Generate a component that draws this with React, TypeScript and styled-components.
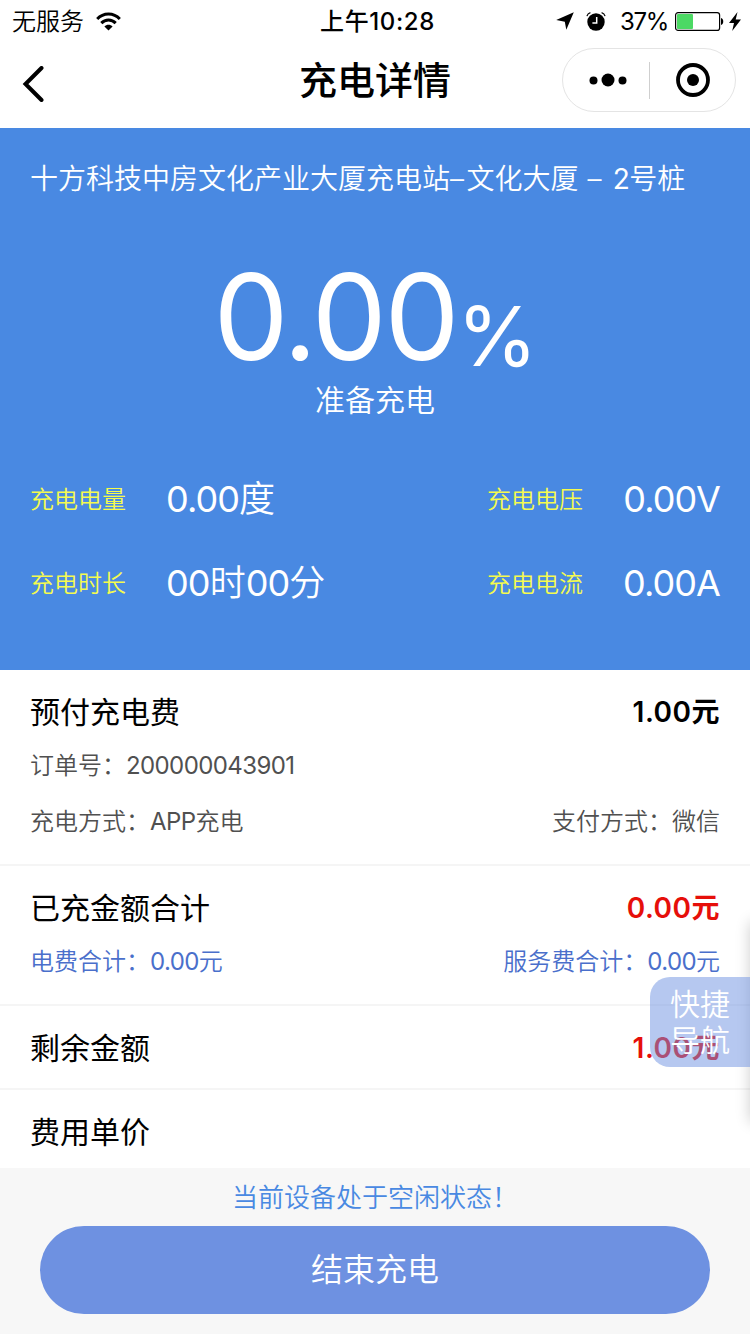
import React from "react";
import styled, { createGlobalStyle } from "styled-components";

const GlobalStyle = createGlobalStyle`
  * { box-sizing: border-box; }
  body {
    margin: 0;
    background: #fff;
    color: #000;
    font-family: Inter, "Noto Sans CJK SC", sans-serif;
  }
  svg { flex: none; }
`;

const Screen = styled.main`
  position: relative;
  display: flex;
  flex-direction: column;
  width: 750px;
  height: 1334px;
  overflow: hidden;
  background: #fff;
`;

const StatusBar = styled.header`
  display: grid;
  grid-template-columns: 1fr auto 1fr;
  align-items: center;
  height: 40px;
  padding: 0 9px 0 12px;
  font-size: 24px;
  line-height: 40px;
`;

const StatusGroup = styled.div<{ $end?: boolean }>`
  display: flex;
  align-items: center;
  justify-content: ${(p) => (p.$end ? "flex-end" : "flex-start")};
`;

const StatusText = styled.span`
  padding-top: 2px;
`;

const Carrier = styled(StatusText)`
  margin-right: 12px;
  font-weight: 350;
`;

const Clock = styled(StatusText)`
  padding: 1px 0 0 2px;
  font-weight: 500;
  letter-spacing: 0.6px;
`;

const BatteryText = styled(StatusText)`
  margin: 0 7px 0 14px;
  padding-top: 1px;
  letter-spacing: -1.3px;
`;

const AlarmSvg = styled.svg`
  margin-left: 12px;
`;

const BoltSvg = styled.svg`
  margin-left: 5px;
`;

const NavBar = styled.nav`
  display: grid;
  grid-template-columns: 1fr auto 1fr;
  align-items: center;
  height: 88px;
  padding: 0 14px 8px;
`;

const BackButton = styled.button`
  display: flex;
  margin: 8px 0 0 8px;
  padding: 0;
  border: 0;
  background: none;
`;

const NavTitle = styled.h1`
  margin: 0;
  font-size: 38px;
  font-weight: 500;
  line-height: 60px;
`;

const Capsule = styled.div`
  justify-self: end;
  display: flex;
  align-items: center;
  width: 174px;
  height: 64px;
  border: 1px solid #e4e4e4;
  border-radius: 32px;
`;

const CapsuleButton = styled.button`
  flex: 1;
  display: flex;
  align-items: center;
  justify-content: center;
  padding: 0;
  border: 0;
  background: none;
`;

const MoreButton = styled(CapsuleButton)`
  flex: none;
  width: 86px;
  padding-left: 3px;
`;

const CapsuleDivider = styled.span`
  width: 1px;
  height: 37px;
  background: #cfcfcf;
`;

const Hero = styled.section`
  display: flex;
  flex-direction: column;
  height: 542px;
  padding: 31px 30px 0;
  background: #4989e2;
  color: #fff;
`;

const StationName = styled.div`
  font-size: 28px;
  line-height: 40px;
  font-weight: 350;
  word-spacing: 1px;
  white-space: nowrap;
`;

const Dash = styled.span`
  letter-spacing: 2.5px;
`;

const Percent = styled.div`
  height: 120px;
  margin-top: 58px;
  font-size: 119px;
  line-height: 120px;
  letter-spacing: -2.5px;
  text-align: center;
`;

const PercentSign = styled.span`
  font-size: 82px;
  line-height: 1;
  letter-spacing: -1px;
  vertical-align: -6px;
`;

const ChargeState = styled.div`
  margin-top: 1px;
  font-size: 30px;
  font-weight: 350;
  line-height: 44px;
  text-align: center;
`;

const Metrics = styled.div`
  display: grid;
  grid-template-columns: 136px 1fr auto auto;
  grid-auto-rows: 84px;
  margin-top: 35px;
  line-height: 84px;
`;

const MetricLabel = styled.span`
  padding-top: 1px;
  color: #f5fb4e;
  font-size: 24px;
  font-weight: 350;
`;

const MetricValue = styled.span<{ $end?: boolean }>`
  padding-left: ${(p) => (p.$end ? "40px" : "0")};
  text-align: ${(p) => (p.$end ? "right" : "left")};
  font-size: 36px;
  font-weight: 350;
`;

const Section = styled.section`
  padding: 14px 30px 17px;
  border-bottom: 2px solid #f5f5f5;
`;

const TitleRow = styled.div`
  display: flex;
  align-items: center;
  justify-content: space-between;
  height: 51px;
  font-size: 30px;
`;

const Amount = styled.span<{ $color?: string }>`
  color: ${(p) => p.$color ?? "#000"};
  font-size: 28px;
  font-weight: 600;
  letter-spacing: 0.5px;
`;

const InfoRow = styled.div<{ $color?: string }>`
  display: flex;
  align-items: center;
  justify-content: space-between;
  height: 56px;
  color: ${(p) => p.$color ?? "#505050"};
  font-size: 24px;
  font-weight: 350;
`;

const Digits = styled.span`
  font-weight: 400;
  letter-spacing: -0.025em;
`;

const Footer = styled.footer`
  position: absolute;
  right: 0;
  bottom: 0;
  left: 0;
  height: 166px;
  padding: 11px 40px 20px;
  background: #f7f7f7;
`;

const Notice = styled.div`
  height: 47px;
  color: #4989e2;
  font-size: 26px;
  font-weight: 350;
  line-height: 38px;
  text-align: center;
`;

const StopButton = styled.button`
  display: block;
  width: 100%;
  height: 88px;
  padding: 0 0 6px;
  border: 0;
  border-radius: 44px;
  background: #6e91e1;
  color: #fff;
  font: inherit;
  font-size: 32px;
  font-weight: 350;
`;

const QuickNav = styled.button`
  position: absolute;
  top: 977px;
  right: 0;
  width: 100px;
  height: 90px;
  padding: 0;
  border: 0;
  border-radius: 20px 0 0 20px;
  background: rgba(110, 145, 225, 0.5);
  color: #fff;
  font: inherit;
  font-size: 30px;
  font-weight: 350;
  line-height: 36px;
`;

const DrawerEdge = styled.div`
  position: absolute;
  top: 922px;
  left: 750px;
  width: 100px;
  height: 200px;
  box-shadow: 0 0 14px rgba(0, 0, 0, 0.2);
`;

const WifiIcon = () => (
  <svg width="25" height="19" viewBox="0 0 25 19" fill="none" stroke="#000" strokeWidth="3">
    <path d="M1.2 6.9C7.4.2 17.6.2 23.8 6.9" />
    <path d="M5.3 11.1c4-4.1 10.4-4.1 14.4 0" />
    <path d="M8.4 14.4c2.3-2.3 5.9-2.3 8.2 0L12.5 18.6z" fill="#000" stroke="none" />
  </svg>
);

const LocationIcon = () => (
  <svg width="18" height="18" viewBox="0 0 18 18">
    <path d="M17.8 0.3L10.3 17.8L8.8 9.7L0.2 8z" />
  </svg>
);

const AlarmIcon = () => (
  <AlarmSvg width="20" height="19" viewBox="0 0 20 19">
    <circle cx="10" cy="10" r="8.7" />
    <path
      d="M0.9 4.2C1.4 2.5 2.6 1.2 4.4 0.7M19.1 4.2C18.6 2.5 17.4 1.2 15.6 0.7"
      fill="none"
      stroke="#000"
      strokeWidth="1.2"
    />
    <path d="M10.7 5v6H6.4" fill="none" stroke="#fff" strokeWidth="1.5" />
  </AlarmSvg>
);

const BatteryIcon = () => (
  <svg width="49" height="19" viewBox="0 0 49 19">
    <rect x="0.6" y="0.6" width="44" height="17.8" rx="2.5" fill="#fff" stroke="#000" strokeWidth="1.2" />
    <rect x="2" y="2" width="16" height="15" rx="1" fill="#4cd964" />
    <path d="M46 6c3 0.8 3 6.2 0 7z" />
  </svg>
);

const BoltIcon = () => (
  <BoltSvg width="12" height="19" viewBox="0 0 12 19">
    <path d="M8.5 0L0 11h5L3.2 19L12 7.6H6.7z" />
  </BoltSvg>
);

const LATIN_RUN = /([0-9A-Z.]+)/;

// Latin runs are set slightly heavier and tighter than the Chinese text around them.
const Mixed = ({ children }: { children: string }) => (
  <span>
    {children
      .split(LATIN_RUN)
      .map((part, i) => (i % 2 ? <Digits key={i}>{part}</Digits> : part))}
  </span>
);

const metrics = [
  ["充电电量", "0.00度", "充电电压", "0.00V"],
  ["充电时长", "00时00分", "充电电流", "0.00A"],
];

export default function App() {
  return (
    <>
      <GlobalStyle />
      <Screen>
        <StatusBar>
          <StatusGroup>
            <Carrier>无服务</Carrier>
            <WifiIcon />
          </StatusGroup>
          <Clock>上午10:28</Clock>
          <StatusGroup $end>
            <LocationIcon />
            <AlarmIcon />
            <BatteryText>37%</BatteryText>
            <BatteryIcon />
            <BoltIcon />
          </StatusGroup>
        </StatusBar>
        <NavBar>
          <BackButton aria-label="返回">
            <svg width="22" height="36" viewBox="0 0 22 36" fill="none" stroke="#000" strokeWidth="4">
              <path d="M19.5 2L3.5 18l16 16" strokeLinecap="round" />
            </svg>
          </BackButton>
          <NavTitle>充电详情</NavTitle>
          <Capsule>
            <MoreButton aria-label="更多">
              <svg width="38" height="14" viewBox="0 0 38 14">
                <circle cx="4.5" cy="7.5" r="4" />
                <circle cx="19" cy="7" r="6.5" />
                <circle cx="33.5" cy="7.5" r="4" />
              </svg>
            </MoreButton>
            <CapsuleDivider />
            <CapsuleButton aria-label="关闭">
              <svg width="34" height="34" viewBox="0 0 34 34">
                <circle cx="17" cy="17" r="15" fill="none" stroke="#000" strokeWidth="3.8" />
                <circle cx="17" cy="17" r="6" />
              </svg>
            </CapsuleButton>
          </Capsule>
        </NavBar>

        <Hero>
          <StationName>
            十方科技中房文化产业大厦充电站<Dash>–</Dash>文化大厦 <Dash>–</Dash> <Mixed>2号桩</Mixed>
          </StationName>
          <Percent>
            0.00<PercentSign>%</PercentSign>
          </Percent>
          <ChargeState>准备充电</ChargeState>
          <Metrics>
            {metrics.map(([label, value, label2, value2]) => (
              <React.Fragment key={label}>
                <MetricLabel>{label}</MetricLabel>
                <MetricValue>
                  <Mixed>{value}</Mixed>
                </MetricValue>
                <MetricLabel>{label2}</MetricLabel>
                <MetricValue $end>
                  <Mixed>{value2}</Mixed>
                </MetricValue>
              </React.Fragment>
            ))}
          </Metrics>
        </Hero>

        <Section>
          <TitleRow>
            预付充电费<Amount>1.00元</Amount>
          </TitleRow>
          <InfoRow>
            <Mixed>订单号：200000043901</Mixed>
          </InfoRow>
          <InfoRow>
            <Mixed>充电方式：APP充电</Mixed>
            <Mixed>支付方式：微信</Mixed>
          </InfoRow>
        </Section>
        <Section>
          <TitleRow>
            已充金额合计<Amount $color="#e60f0a">0.00元</Amount>
          </TitleRow>
          <InfoRow $color="#4a6fcb">
            <Mixed>电费合计：0.00元</Mixed>
            <Mixed>服务费合计：0.00元</Mixed>
          </InfoRow>
        </Section>
        <Section>
          <TitleRow>
            剩余金额<Amount $color="#e60f0a">1.00元</Amount>
          </TitleRow>
        </Section>
        <Section>
          <TitleRow>费用单价</TitleRow>
        </Section>

        <Footer>
          <Notice>当前设备处于空闲状态！</Notice>
          <StopButton>结束充电</StopButton>
        </Footer>
        <DrawerEdge />
        <QuickNav>
          快捷
          <br />
          导航
        </QuickNav>
      </Screen>
    </>
  );
}
